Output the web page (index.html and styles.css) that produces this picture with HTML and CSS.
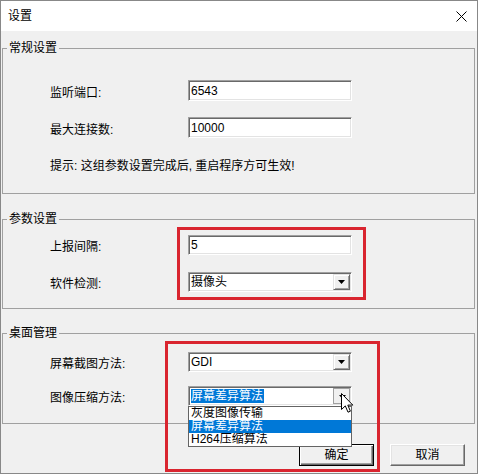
FILE: index.html
```html
<!DOCTYPE html>
<html lang="zh-CN">
<head>
    <meta charset="UTF-8">
    <title>设置</title>
    <link rel="stylesheet" href="styles.css">
</head>
<body>
    <div class="dialog">
        <!-- Title bar -->
        <div class="titlebar">
            <span class="title">设置</span>
            <svg class="close" width="11" height="11" viewBox="0 0 11 11">
                <path d="M0.5 0.5L10.5 10.5M10.5 0.5L0.5 10.5" stroke="#000" stroke-width="1"/>
            </svg>
        </div>

        <div class="client">
            <!-- General settings -->
            <fieldset class="group group-general">
                <legend>常规设置</legend>
                <div class="group-body">
                    <div class="field">
                        <label>监听端口:</label>
                        <input type="text" class="edit" value="6543">
                    </div>
                    <div class="field field-next">
                        <label>最大连接数:</label>
                        <input type="text" class="edit" value="10000">
                    </div>
                    <p class="hint">提示: 这组参数设置完成后, 重启程序方可生效!</p>
                </div>
            </fieldset>

            <!-- Parameter settings -->
            <fieldset class="group group-params">
                <legend>参数设置</legend>
                <div class="group-body">
                    <div class="field">
                        <label>上报间隔:</label>
                        <input type="text" class="edit edit-short" value="5">
                    </div>
                    <div class="field field-next">
                        <label>软件检测:</label>
                        <div class="combo">
                            <span class="combo-text">摄像头</span>
                            <span class="combo-button">
                                <svg width="7" height="4" viewBox="0 0 7 4"><polygon points="0,0 7,0 3.5,4" fill="#000"/></svg>
                            </span>
                        </div>
                    </div>
                </div>
            </fieldset>

            <!-- Desktop management -->
            <fieldset class="group group-desktop">
                <legend>桌面管理</legend>
                <div class="group-body">
                    <div class="field">
                        <label>屏幕截图方法:</label>
                        <div class="combo">
                            <span class="combo-text">GDI</span>
                            <span class="combo-button">
                                <svg width="7" height="4" viewBox="0 0 7 4"><polygon points="0,0 7,0 3.5,4" fill="#000"/></svg>
                            </span>
                        </div>
                    </div>
                    <div class="field field-next-close">
                        <label>图像压缩方法:</label>
                        <div class="combo">
                            <span class="combo-text"><span class="selected">屏幕差异算法</span></span>
                            <span class="combo-button pressed">
                                <svg width="7" height="4" viewBox="0 0 7 4"><polygon points="0,0 7,0 3.5,4" fill="#000"/></svg>
                            </span>
                        </div>
                    </div>
                </div>
            </fieldset>

            <div class="buttons">
                <button class="btn btn-default">确定</button>
                <button class="btn">取消</button>
            </div>
        </div>

        <!-- Open combo list -->
        <ul class="dropdown-list">
            <li>灰度图像传输</li>
            <li class="active">屏幕差异算法</li>
            <li>H264压缩算法</li>
        </ul>

        <!-- Red annotation frames -->
        <div class="mark mark-params"></div>
        <div class="mark mark-desktop"></div>

        <!-- Mouse pointer -->
        <svg class="cursor" width="13" height="21" viewBox="0 0 13 21">
            <path d="M0.5 0.5V16.5L4.3 12.9L7 19.2L9.4 18.2L6.8 12.1H11.8Z" fill="#fff" stroke="#000" stroke-width="1" stroke-linejoin="miter"/>
        </svg>
    </div>
</body>
</html>
```

FILE: styles.css
```css
body {
    margin: 0;
    background-color: #fff;
    font-family: 'Liberation Sans', 'Noto Sans CJK SC', sans-serif;
    font-size: 12px;
    line-height: 14px;
    color: #000;
}

.dialog {
    position: relative;
    width: 478px;
    height: 474px;
    box-sizing: border-box;
    border: 1px solid #888;
    display: flex;
    flex-direction: column;
}

.titlebar {
    height: 30px;
    flex: none;
    background-color: #fff;
    display: flex;
    align-items: center;
    justify-content: space-between;
    padding: 0 10px 0 7px;
}

.client {
    flex: 1;
    background-color: #f0f0f0;
    padding: 10px 2px 0 1px;
}

/* Group boxes */
.group {
    margin: 0;
    padding: 0;
    min-width: 0;
    border: 1px solid #a0a0a0;
}

.group legend {
    margin-left: 4px;
    padding: 0 2px;
    line-height: 14px;
}

.group-body {
    padding-left: 47px;
}

.group-general .group-body {
    padding-top: 25px;
    padding-bottom: 20px;
}

.group-params {
    margin-top: 18px;
}

.group-params .group-body {
    padding-top: 9px;
    padding-bottom: 16px;
}

.group-desktop {
    margin-top: 17px;
}

.group-desktop .group-body {
    padding-top: 12px;
    padding-bottom: 17px;
}

.field {
    display: flex;
    align-items: center;
}

.field-next {
    margin-top: 16px;
}

.group-params .field-next {
    margin-top: 17px;
}

.field-next-close {
    margin-top: 14px;
}

.field label {
    width: 138px;
    padding-top: 4px;
}

.hint {
    margin: 21px 0 0;
}

/* Edit boxes */
.edit {
    box-sizing: border-box;
    width: 164px;
    height: 21px;
    margin: 0;
    padding: 0 2px;
    border: 1px solid;
    border-color: #a0a0a0 #fff #fff #a0a0a0;
    box-shadow: inset 1px 1px 0 #696969, inset -1px -1px 0 #e3e3e3;
    background-color: #fff;
    font: inherit;
    outline: none;
}

.edit-short {
    height: 20px;
}

/* Combo boxes */
.combo {
    box-sizing: border-box;
    width: 164px;
    height: 20px;
    padding: 1px;
    display: flex;
    align-items: center;
    border: 1px solid;
    border-color: #a0a0a0 #fff #fff #a0a0a0;
    box-shadow: inset 1px 1px 0 #696969, inset -1px -1px 0 #e3e3e3;
    background-color: #fff;
}

.combo-text {
    flex: 1;
    padding-left: 1px;
}

.selected {
    background-color: #0078d7;
    color: #fff;
    padding: 0 1px 0 0;
}

.combo-button {
    box-sizing: border-box;
    width: 17px;
    height: 16px;
    display: flex;
    justify-content: center;
    align-items: center;
    background-color: #f0f0f0;
    border: 1px solid;
    border-color: #e3e3e3 #696969 #696969 #e3e3e3;
    box-shadow: inset 1px 1px 0 #fff, inset -1px -1px 0 #a0a0a0;
}

.combo-button.pressed {
    border-color: #a0a0a0;
    box-shadow: none;
    padding: 1px 0 0 1px;
}

/* Bottom buttons */
.buttons {
    margin-top: 20px;
    padding-right: 10px;
    display: flex;
    justify-content: flex-end;
    gap: 16px;
}

.btn {
    box-sizing: border-box;
    width: 75px;
    height: 22px;
    margin: 0;
    padding: 0;
    border: 1px solid;
    border-color: #fff #696969 #696969 #fff;
    box-shadow: inset -1px -1px 0 #a0a0a0, inset 1px 1px 0 #e3e3e3;
    background-color: #f0f0f0;
    font: inherit;
    color: #000;
}

.btn-default {
    border-color: #000;
    box-shadow: inset 1px 1px 0 #fff, inset -1px -1px 0 #696969, inset -2px -2px 0 #a0a0a0;
}

/* Open list of the focused combo */
.dropdown-list {
    position: absolute;
    left: 187px;
    top: 405px;
    width: 164px;
    box-sizing: border-box;
    margin: 0;
    padding: 0;
    list-style: none;
    background-color: #fff;
    border: 1px solid #646464;
}

.dropdown-list li {
    height: 13px;
    line-height: 13px;
    padding-left: 2px;
    overflow: hidden;
}

.dropdown-list li.active {
    background-color: #0078d7;
    color: #fff;
}

/* Annotation frames */
.mark {
    position: absolute;
    box-sizing: border-box;
    border: 3px solid #d9252f;
}

.mark-params {
    left: 176px;
    top: 226px;
    width: 189px;
    height: 73px;
}

.mark-desktop {
    left: 164px;
    top: 340px;
    width: 215px;
    height: 131px;
}

.cursor {
    position: absolute;
    left: 340px;
    top: 392px;
}
```
